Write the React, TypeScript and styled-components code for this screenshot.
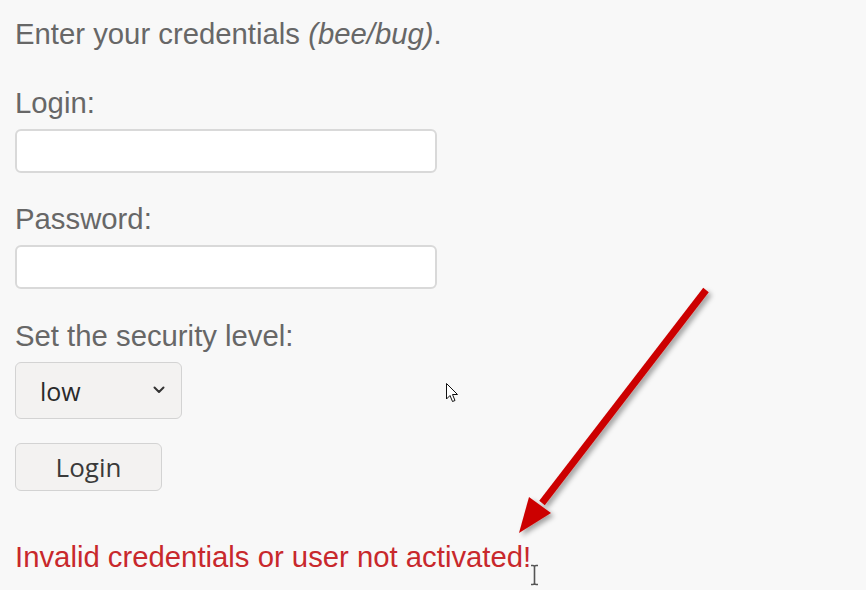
import React from "react";
import styled, { createGlobalStyle } from "styled-components";

const Global = createGlobalStyle`
  html, body { margin: 0; padding: 0; background: #f8f8f8; }
  body { font-family: "Liberation Sans", Arial, sans-serif; }
`;

const Page = styled.div`
  position: relative;
  width: 866px;
  height: 590px;
  overflow: hidden;
  box-sizing: border-box;
  padding: 19px 0 0 15px;
  background: #f8f8f8;
  color: #676767;
  font-size: 29.3px;
  line-height: 30px;
`;

const Intro = styled.p`
  margin: 0;
  em { font-style: italic; }
`;

const Field = styled.div<{ $top: number }>`
  display: flex;
  flex-direction: column;
  align-items: flex-start;
  gap: 11px;
  margin-top: ${(p) => p.$top}px;
`;

const Label = styled.label`
  display: block;
`;

const TextInput = styled.input`
  box-sizing: border-box;
  width: 422px;
  height: 44px;
  background: #fff;
  border: 2px solid #d9d9d9;
  border-radius: 6px;
  outline: none;
  font-size: 20px;
  padding: 0 10px;
`;

const SelectWrap = styled.div`
  position: relative;
  width: 167px;
  height: 57px;
`;

const Select = styled.select`
  box-sizing: border-box;
  width: 100%;
  height: 100%;
  appearance: none;
  -webkit-appearance: none;
  background: #f3f2f1;
  border: 1.5px solid #d3d3d3;
  border-radius: 6px;
  padding: 0 0 0 24px;
  font-family: "Open Sans", "Noto Sans", sans-serif;
  font-size: 25px;
  color: #2a2a2a;
  outline: none;
`;

const Chevron = styled.svg`
  position: absolute;
  right: 17px;
  top: 24px;
  pointer-events: none;
`;

const Button = styled.button`
  box-sizing: border-box;
  width: 147px;
  height: 48px;
  margin-top: 24px;
  background: #f3f2f1;
  border: 1.5px solid #d3d3d3;
  border-radius: 6px;
  font-family: "Open Sans", "Noto Sans", sans-serif;
  font-size: 26px;
  color: #3a3a3a;
  padding: 0;
  display: block;
`;

const ErrorMsg = styled.p`
  margin: 51px 0 0;
  color: #c8282c;
`;

const Overlay = styled.svg`
  position: absolute;
  left: 0;
  top: 0;
  pointer-events: none;
`;

export default function App() {
  return (
    <>
      <Global />
      <Page>
        <Intro>
          Enter your credentials <em>(bee/bug)</em>.
        </Intro>
        <Field $top={39}>
          <Label htmlFor="login">Login:</Label>
          <TextInput id="login" type="text" />
        </Field>
        <Field $top={31}>
          <Label htmlFor="password">Password:</Label>
          <TextInput id="password" type="password" />
        </Field>
        <Field $top={32}>
          <Label htmlFor="level">Set the security level:</Label>
          <SelectWrap>
            <Select id="level" defaultValue="0">
              <option value="0">low</option>
              <option value="1">medium</option>
              <option value="2">high</option>
            </Select>
            <Chevron width="12" height="8" viewBox="0 0 12 8">
              <path d="M1.5 1.5 L6 6 L10.5 1.5" fill="none" stroke="#333" strokeWidth="2" strokeLinecap="round" strokeLinejoin="round" />
            </Chevron>
          </SelectWrap>
        </Field>
        <Button type="button">Login</Button>
        <ErrorMsg>Invalid credentials or user not activated!</ErrorMsg>

        <Overlay width="866" height="590" viewBox="0 0 866 590">
          <defs>
            <filter id="sh" x="-20%" y="-20%" width="140%" height="140%">
              <feDropShadow dx="3" dy="3" stdDeviation="2.5" floodColor="#000" floodOpacity="0.35" />
            </filter>
          </defs>
          <g filter="url(#sh)" fill="#cc0000">
            <line x1="706" y1="290" x2="542" y2="503" stroke="#cc0000" strokeWidth="7" />
            <polygon points="519,533 529,497 551,513" />
          </g>
          {/* arrow cursor */}
          <path
            d="M446.5 383.5 L446.5 399 L450 395.5 L452.5 401.5 L455 400.5 L452.5 394.5 L457.5 394.5 Z"
            fill="#fff"
            stroke="#111"
            strokeWidth="1"
            strokeLinejoin="miter"
          />
          {/* I-beam cursor */}
          <path
            d="M531 565.5 H533 Q534.5 565.5 534.5 567 V583 Q534.5 584.5 533 584.5 H531 M538 565.5 H536 Q534.5 565.5 534.5 567 M534.5 583 Q534.5 584.5 536 584.5 H538"
            fill="none"
            stroke="#555"
            strokeWidth="1.6"
          />
        </Overlay>
      </Page>
    </>
  );
}
